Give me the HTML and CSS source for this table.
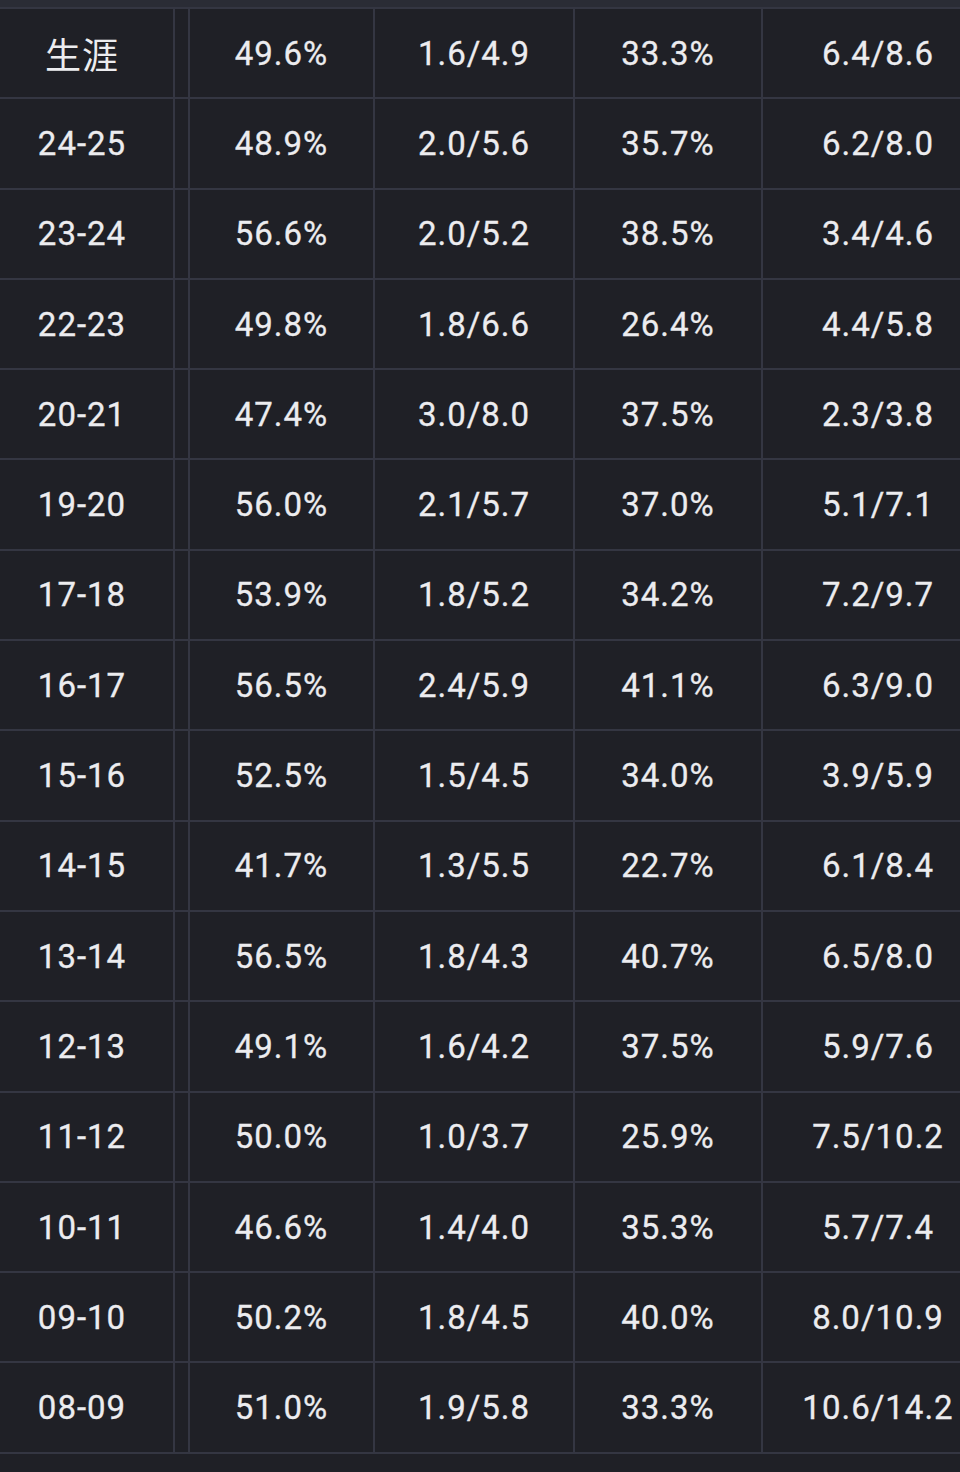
FILE: index.html
```html
<!DOCTYPE html>
<html lang="zh">
<head>
<meta charset="utf-8">
<title>Stats</title>
<link rel="stylesheet" href="styles.css">
</head>
<body>
<div class="topband"></div>
<div class="table">
  <div class="row"><div class="c c1 cjk">生涯</div><div class="c c2">49.6%</div><div class="c c3">1.6/4.9</div><div class="c c4">33.3%</div><div class="c c5">6.4/8.6</div></div>
  <div class="row"><div class="c c1">24-25</div><div class="c c2">48.9%</div><div class="c c3">2.0/5.6</div><div class="c c4">35.7%</div><div class="c c5">6.2/8.0</div></div>
  <div class="row"><div class="c c1">23-24</div><div class="c c2">56.6%</div><div class="c c3">2.0/5.2</div><div class="c c4">38.5%</div><div class="c c5">3.4/4.6</div></div>
  <div class="row"><div class="c c1">22-23</div><div class="c c2">49.8%</div><div class="c c3">1.8/6.6</div><div class="c c4">26.4%</div><div class="c c5">4.4/5.8</div></div>
  <div class="row"><div class="c c1">20-21</div><div class="c c2">47.4%</div><div class="c c3">3.0/8.0</div><div class="c c4">37.5%</div><div class="c c5">2.3/3.8</div></div>
  <div class="row"><div class="c c1">19-20</div><div class="c c2">56.0%</div><div class="c c3">2.1/5.7</div><div class="c c4">37.0%</div><div class="c c5">5.1/7.1</div></div>
  <div class="row"><div class="c c1">17-18</div><div class="c c2">53.9%</div><div class="c c3">1.8/5.2</div><div class="c c4">34.2%</div><div class="c c5">7.2/9.7</div></div>
  <div class="row"><div class="c c1">16-17</div><div class="c c2">56.5%</div><div class="c c3">2.4/5.9</div><div class="c c4">41.1%</div><div class="c c5">6.3/9.0</div></div>
  <div class="row"><div class="c c1">15-16</div><div class="c c2">52.5%</div><div class="c c3">1.5/4.5</div><div class="c c4">34.0%</div><div class="c c5">3.9/5.9</div></div>
  <div class="row"><div class="c c1">14-15</div><div class="c c2">41.7%</div><div class="c c3">1.3/5.5</div><div class="c c4">22.7%</div><div class="c c5">6.1/8.4</div></div>
  <div class="row"><div class="c c1">13-14</div><div class="c c2">56.5%</div><div class="c c3">1.8/4.3</div><div class="c c4">40.7%</div><div class="c c5">6.5/8.0</div></div>
  <div class="row"><div class="c c1">12-13</div><div class="c c2">49.1%</div><div class="c c3">1.6/4.2</div><div class="c c4">37.5%</div><div class="c c5">5.9/7.6</div></div>
  <div class="row"><div class="c c1">11-12</div><div class="c c2">50.0%</div><div class="c c3">1.0/3.7</div><div class="c c4">25.9%</div><div class="c c5">7.5/10.2</div></div>
  <div class="row"><div class="c c1">10-11</div><div class="c c2">46.6%</div><div class="c c3">1.4/4.0</div><div class="c c4">35.3%</div><div class="c c5">5.7/7.4</div></div>
  <div class="row"><div class="c c1">09-10</div><div class="c c2">50.2%</div><div class="c c3">1.8/4.5</div><div class="c c4">40.0%</div><div class="c c5">8.0/10.9</div></div>
  <div class="row"><div class="c c1">08-09</div><div class="c c2">51.0%</div><div class="c c3">1.9/5.8</div><div class="c c4">33.3%</div><div class="c c5">10.6/14.2</div></div>
</div>
<div class="tail"></div>
</body>
</html>
```

FILE: styles.css
```css
html, body {
  margin: 0;
  padding: 0;
  background: #1f2026;
  overflow: hidden;
  width: 960px;
  height: 1472px;
}

.topband {
  height: 7px;
  background: #2a2c35;
  border-bottom: 2px solid #343642;
}

.table {
  margin-left: -9px;
  width: 1002px;
}

.row {
  display: grid;
  grid-template-columns: 184px 200px 200px 188px 230px;
  height: 88.3px;
  border-bottom: 2px solid #343642;
  font-family: Roboto, "Noto Sans CJK SC", sans-serif;
  font-weight: 400;
  font-size: 33px;
  letter-spacing: 1px;
  color: #ececef;
  -webkit-text-stroke: 0.3px #ececef;
}

.c {
  display: flex;
  align-items: center;
  justify-content: center;
  border-right: 2px solid #343642;
}

.c2 {
  margin-left: 13px;
  border-left: 2px solid #343642;
}

.c5 {
  border-right: none;
}

.cjk {
  font-family: "Noto Sans CJK SC", sans-serif;
  font-weight: 400;
  font-size: 36px;
  letter-spacing: 1px;
  -webkit-text-stroke: 0;
}

.tail {
  height: 20px;
}
```
